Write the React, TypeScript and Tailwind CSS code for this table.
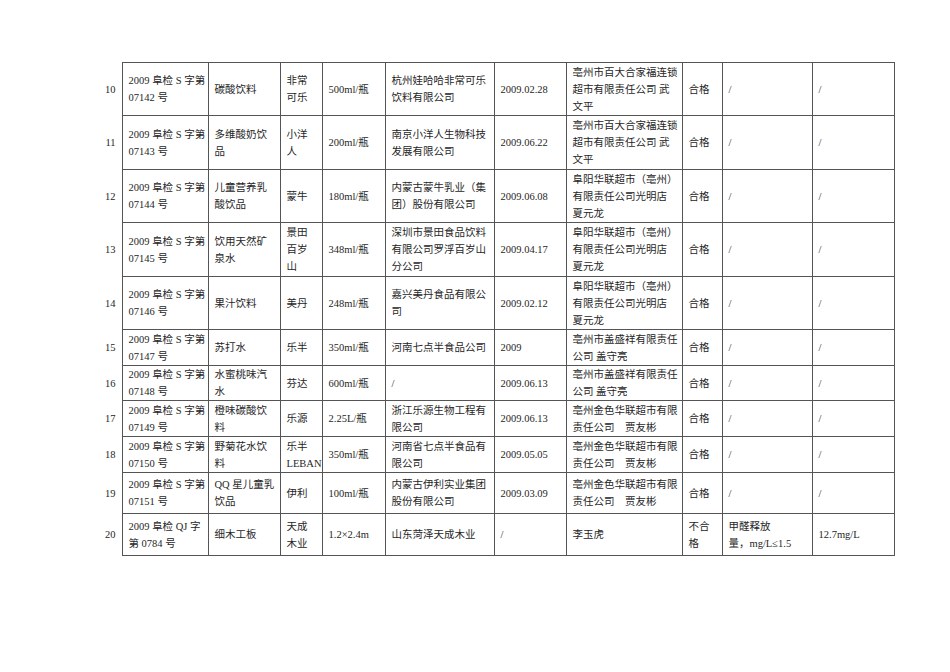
import React from 'react';

type Row = {
  no: string;
  height: string;
  cells: string[][];
};

const rows: Row[] = [
  {
    no: '10',
    height: 'h-[53px]',
    cells: [
      ['2009 阜检 S 字第', '07142 号'],
      ['碳酸饮料'],
      ['非常', '可乐'],
      ['500ml/瓶'],
      ['杭州娃哈哈非常可乐', '饮料有限公司'],
      ['2009.02.28'],
      ['亳州市百大合家福连锁', '超市有限责任公司 武', '文平'],
      ['合格'],
      ['/'],
      ['/'],
    ],
  },
  {
    no: '11',
    height: 'h-[54px]',
    cells: [
      ['2009 阜检 S 字第', '07143 号'],
      ['多维酸奶饮', '品'],
      ['小洋', '人'],
      ['200ml/瓶'],
      ['南京小洋人生物科技', '发展有限公司'],
      ['2009.06.22'],
      ['亳州市百大合家福连锁', '超市有限责任公司 武', '文平'],
      ['合格'],
      ['/'],
      ['/'],
    ],
  },
  {
    no: '12',
    height: 'h-[53px]',
    cells: [
      ['2009 阜检 S 字第', '07144 号'],
      ['儿童营养乳', '酸饮品'],
      ['蒙牛'],
      ['180ml/瓶'],
      ['内蒙古蒙牛乳业（集', '团）股份有限公司'],
      ['2009.06.08'],
      ['阜阳华联超市（亳州）', '有限责任公司光明店', '夏元龙'],
      ['合格'],
      ['/'],
      ['/'],
    ],
  },
  {
    no: '13',
    height: 'h-[54px]',
    cells: [
      ['2009 阜检 S 字第', '07145 号'],
      ['饮用天然矿', '泉水'],
      ['景田', '百岁', '山'],
      ['348ml/瓶'],
      ['深圳市景田食品饮料', '有限公司罗浮百岁山', '分公司'],
      ['2009.04.17'],
      ['阜阳华联超市（亳州）', '有限责任公司光明店', '夏元龙'],
      ['合格'],
      ['/'],
      ['/'],
    ],
  },
  {
    no: '14',
    height: 'h-[53px]',
    cells: [
      ['2009 阜检 S 字第', '07146 号'],
      ['果汁饮料'],
      ['美丹'],
      ['248ml/瓶'],
      ['嘉兴美丹食品有限公', '司'],
      ['2009.02.12'],
      ['阜阳华联超市（亳州）', '有限责任公司光明店', '夏元龙'],
      ['合格'],
      ['/'],
      ['/'],
    ],
  },
  {
    no: '15',
    height: 'h-[36px]',
    cells: [
      ['2009 阜检 S 字第', '07147 号'],
      ['苏打水'],
      ['乐半'],
      ['350ml/瓶'],
      ['河南七点半食品公司'],
      ['2009'],
      ['亳州市盖盛祥有限责任', '公司 盖守亮'],
      ['合格'],
      ['/'],
      ['/'],
    ],
  },
  {
    no: '16',
    height: 'h-[35px]',
    cells: [
      ['2009 阜检 S 字第', '07148 号'],
      ['水蜜桃味汽', '水'],
      ['芬达'],
      ['600ml/瓶'],
      ['/'],
      ['2009.06.13'],
      ['亳州市盖盛祥有限责任', '公司 盖守亮'],
      ['合格'],
      ['/'],
      ['/'],
    ],
  },
  {
    no: '17',
    height: 'h-[36px]',
    cells: [
      ['2009 阜检 S 字第', '07149 号'],
      ['橙味碳酸饮', '料'],
      ['乐源'],
      ['2.25L/瓶'],
      ['浙江乐源生物工程有', '限公司'],
      ['2009.06.13'],
      ['亳州金色华联超市有限', '责任公司\u3000贾友彬'],
      ['合格'],
      ['/'],
      ['/'],
    ],
  },
  {
    no: '18',
    height: 'h-[36px]',
    cells: [
      ['2009 阜检 S 字第', '07150 号'],
      ['野菊花水饮', '料'],
      ['乐半', 'LEBAN'],
      ['350ml/瓶'],
      ['河南省七点半食品有', '限公司'],
      ['2009.05.05'],
      ['亳州金色华联超市有限', '责任公司\u3000贾友彬'],
      ['合格'],
      ['/'],
      ['/'],
    ],
  },
  {
    no: '19',
    height: 'h-[41px]',
    cells: [
      ['2009 阜检 S 字第', '07151 号'],
      ['QQ 星儿童乳', '饮品'],
      ['伊利'],
      ['100ml/瓶'],
      ['内蒙古伊利实业集团', '股份有限公司'],
      ['2009.03.09'],
      ['亳州金色华联超市有限', '责任公司\u3000贾友彬'],
      ['合格'],
      ['/'],
      ['/'],
    ],
  },
  {
    no: '20',
    height: 'h-[42px]',
    cells: [
      ['2009 阜检 QJ 字', '第 0784 号'],
      ['细木工板'],
      ['天成', '木业'],
      ['1.2×2.4m'],
      ['山东菏泽天成木业'],
      ['/'],
      ['李玉虎'],
      ['不合', '格'],
      ['甲醛释放', '量，mg/L≤1.5'],
      ['12.7mg/L'],
    ],
  },
];

const widths = ['w-[86px]', 'w-[72px]', 'w-[38px]', 'w-[63px]', 'w-[109px]', 'w-[72px]', 'w-[116px]', 'w-[40px]', 'w-[90px]', 'w-[82px]'];

export default function App() {
  return (
    <div
      className="w-[950px] h-[672px] bg-white pt-[62px] pl-[97px] text-[#262626]"
      style={{ fontFamily: '"Liberation Serif", "Noto Sans CJK SC", serif' }}
    >
      <table className="table-fixed border-collapse text-[10.5px] leading-[17px]">
        <colgroup>
          <col className="w-[25px]" />
          {widths.map((w, i) => (
            <col key={i} className={w} />
          ))}
        </colgroup>
        <tbody>
          {rows.map((row) => (
            <tr key={row.no} className={row.height}>
              <td className="border-0 p-0 pr-[6px] text-right align-middle">{row.no}</td>
              {row.cells.map((lines, i) => (
                <td
                  key={i}
                  className="border border-[#555] p-0 pl-[6px] align-middle whitespace-nowrap"
                >
                  {lines.map((line, j) => (
                    <div key={j}>{line}</div>
                  ))}
                </td>
              ))}
            </tr>
          ))}
        </tbody>
      </table>
    </div>
  );
}
